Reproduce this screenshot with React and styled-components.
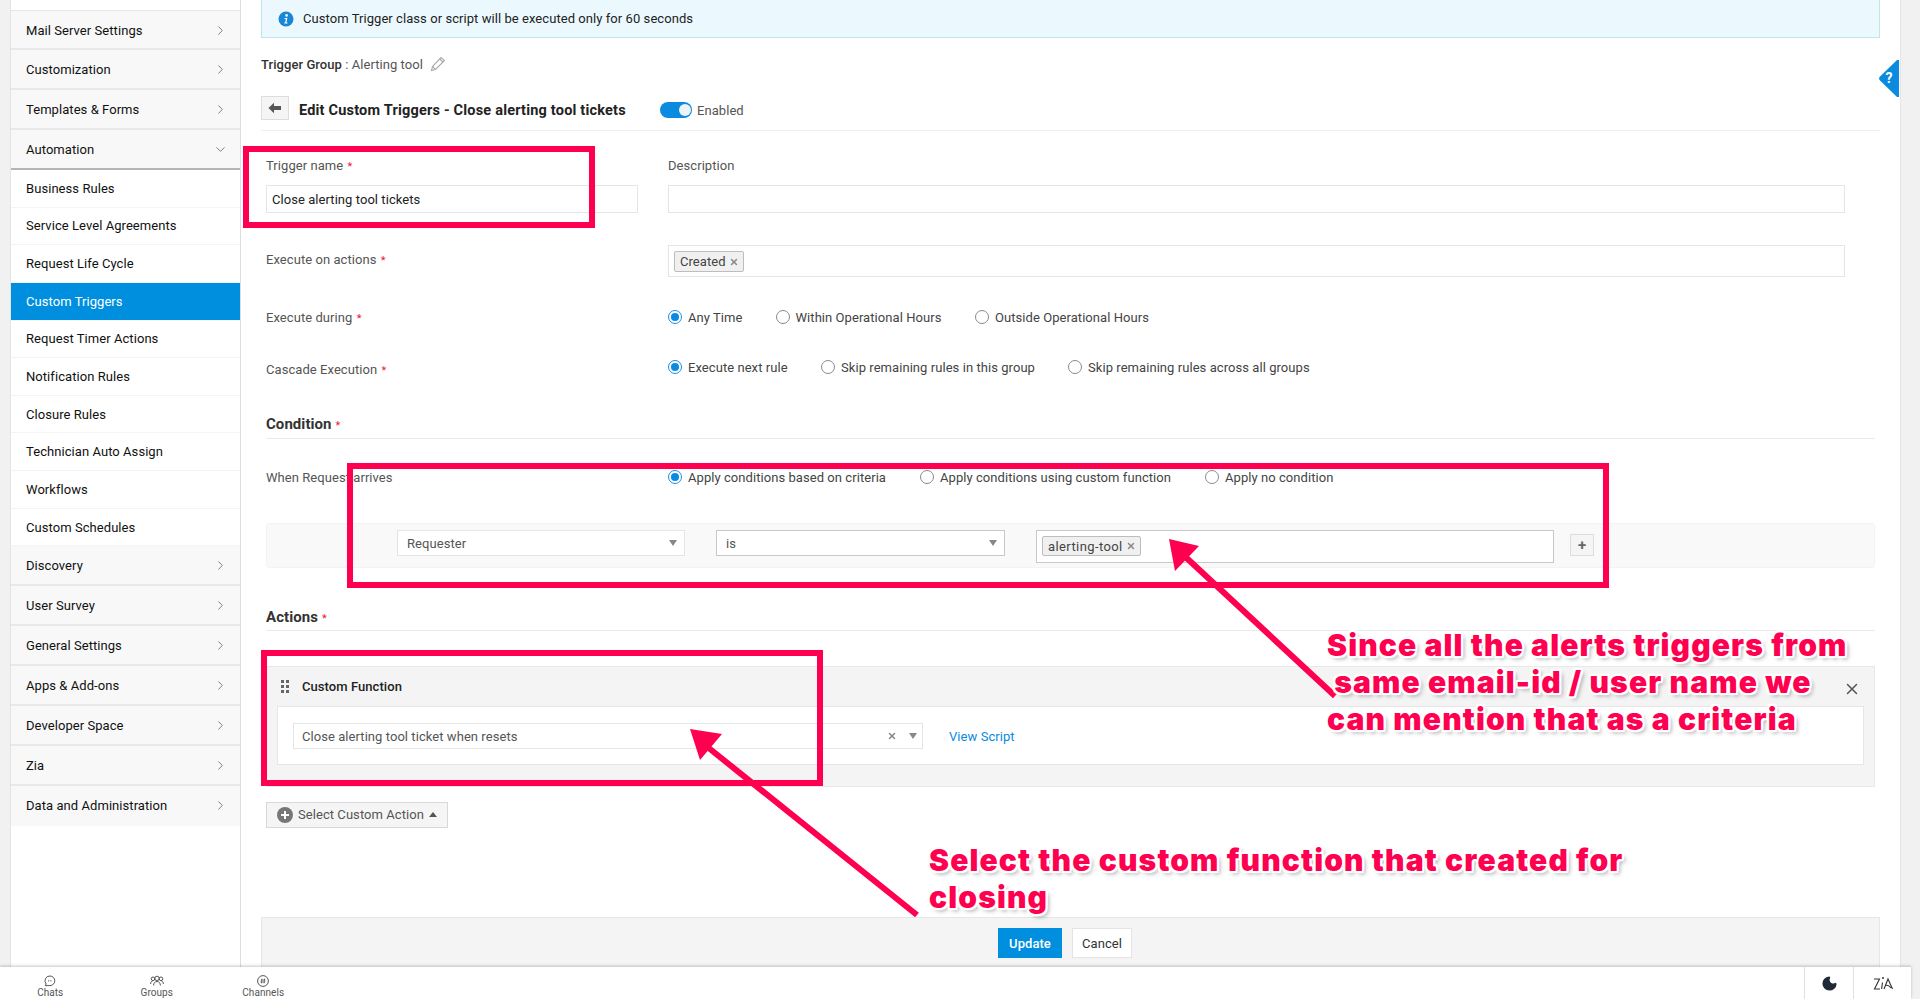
import React from "react";
import styled, { createGlobalStyle } from "styled-components";
import { ChevronRight, ChevronDown, Moon, X } from "lucide-react";

const Global = createGlobalStyle`
  html, body { margin: 0; padding: 0; background: #fff; }
  body { font-family: Roboto, "Liberation Sans", sans-serif; font-size: 13px; letter-spacing: 0.06px; color: #333; }
  * { box-sizing: border-box; }
`;

const Page = styled.div`
  position: relative;
  width: 1920px;
  height: 999px;
  overflow: hidden;
  background: #f1f1f1;
`;
const Body = styled.div`
  display: flex;
  height: 967px;
  background: #fff;
`;
const Gutter = styled.div`
  width: 11px;
  background: #f1f1f1;
  border-right: 1px solid #e4e4e4;
  flex: none;
`;
const Sidebar = styled.nav`
  width: 230px;
  flex: none;
  padding-top: 10px;
  background: #fff;
  border-right: 1px solid #dedede;
`;
const GroupItem = styled.div`
  display: flex;
  align-items: center;
  justify-content: space-between;
  height: 40px;
  padding: 1px 12px 0 15px;
  background: #f8f8f8;
  color: #111;
  border-top: ${(p) => (p.$first ? "1px solid #e6e6e6" : "0")};
  border-bottom: ${(p) => (p.$open ? "2px solid #b4b4b4" : "2px solid #e8e8e8")};
  svg { color: #777; }
  &:last-child { border-bottom-color: transparent; }
`;
const SubItem = styled.div`
  display: flex;
  align-items: center;
  height: 37.65px;
  padding: 0 15px;
  color: ${(p) => (p.$active ? "#fff" : "#111")};
  background: ${(p) => (p.$active ? "#008fdf" : "#fff")};
  border-bottom: 1px solid #f4f4f4;
`;
const Content = styled.main`
  width: 1619px;
  flex: none;
  margin-left: 20px;
`;
const Rail = styled.div`
  flex: 1;
  margin-left: 20px;
  background: #f1f1f1;
  border-left: 1px solid #e4e4e4;
`;
const Banner = styled.div`
  display: flex;
  align-items: center;
  gap: 9px;
  height: 38px;
  padding-left: 16px;
  background: #ebf9ff;
  border: 1px solid #bfe6ef;
  border-top: 0;
  color: #222;
`;
const GroupLine = styled.div`
  display: flex;
  align-items: center;
  gap: 7px;
  height: 16px;
  margin: 18px 0 24px;
  color: #555;
  b { font-weight: 500; color: #333; }
`;
const TitleBar = styled.div`
  display: flex;
  height: 35px;
  border-bottom: 1px solid #eee;
`;
const BackButton = styled.div`
  display: flex;
  align-items: center;
  justify-content: center;
  width: 28px;
  height: 24px;
  background: #f5f5f5;
  border: 1px solid #ddd;
`;
const Title = styled.h1`
  margin: 1px 0 0 10px;
  width: 361px;
  height: 28px;
  font-size: 14.5px;
  line-height: 28px;
  font-weight: 700;
  letter-spacing: 0.2px;
  white-space: nowrap;
  color: #222;
`;
const Toggle = styled.div`
  position: relative;
  width: 32px;
  height: 16px;
  margin-top: 6px;
  border-radius: 8px;
  background: #0a8be0;
  &::after {
    content: "";
    position: absolute;
    top: 2px;
    right: 1px;
    width: 12px;
    height: 12px;
    border-radius: 50%;
    background: #eef3f7;
  }
`;
const ToggleText = styled.span`
  margin: 7px 0 0 5px;
  line-height: 16px;
  color: #555;
`;
const Form = styled.div`
  padding: 0 5px;
`;
const NameRow = styled.div`
  display: grid;
  grid-template-columns: 372px 1fr;
  column-gap: 30px;
  padding-top: 27px;
  padding-right: 30px;
`;
const Field = styled.div`
  display: flex;
  flex-direction: column;
  gap: 11px;
`;
const Label = styled.label`
  display: block;
  height: 16px;
  line-height: 16px;
  color: #555;
  padding-top: ${(p) => p.$top || 0}px;
  box-sizing: content-box;
  i { color: #f0143c; font-style: normal; font-size: 11px; margin-left: 1px; }
`;
const TextBox = styled.div`
  display: flex;
  align-items: center;
  height: 28px;
  padding-left: 5px;
  color: #222;
  border: 1px solid #e5e5e5;
`;
const Row = styled.div`
  display: grid;
  grid-template-columns: 402px 1fr;
  margin-top: ${(p) => p.$mt}px;
  height: ${(p) => p.$h}px;
  padding-right: 30px;
`;
const ActionsBox = styled.div`
  height: 32px;
  padding: 5px;
  border: 1px solid #e5e5e5;
`;
const Chip = styled.span`
  display: inline-flex;
  align-items: center;
  gap: 3px;
  height: ${(p) => p.$h || 21}px;
  padding: 0 4px 0 5px;
  color: #444;
  letter-spacing: ${(p) => p.$ls || 0.06}px;
  background: #f0f0f0;
  border: 1px solid #bdbdbd;
  border-radius: 2px;
  svg { color: #888; }
`;
const Radios = styled.div`
  display: flex;
  height: 16px;
  align-items: center;
`;
const RadioItem = styled.span`
  display: inline-flex;
  align-items: center;
  width: ${(p) => p.$w}px;
  gap: 6px;
  color: #444;
  white-space: nowrap;
`;
const Dot = styled.span`
  position: relative;
  width: 14px;
  height: 14px;
  flex: none;
  border-radius: 50%;
  border: 1px solid ${(p) => (p.$on ? "#1a8fdf" : "#8a8a8a")};
  background: #fff;
  &::after {
    content: "";
    display: ${(p) => (p.$on ? "block" : "none")};
    position: absolute;
    inset: 2px;
    border-radius: 50%;
    background: #0a8be0;
  }
`;
const Heading = styled.h2`
  margin: ${(p) => p.$mt}px 0 0;
  height: ${(p) => p.$h}px;
  padding-top: 0;
  font-size: 15px;
  line-height: 20px;
  font-weight: 700;
  color: #333;
  border-bottom: 1px solid #eaeaea;
  i { color: #f0143c; font-style: normal; font-size: 11px; margin-left: 4px; font-weight: 400; }
`;
const CriteriaRow = styled.div`
  display: flex;
  align-items: flex-start;
  height: 45px;
  margin-top: 38px;
  padding: 6px 0 0 130px;
  background: #f9f9f9;
  border: 1px solid #f3f3f3;
  border-radius: 4px;
`;
const SelectBox = styled.div`
  display: flex;
  align-items: center;
  justify-content: space-between;
  flex: none;
  width: ${(p) => p.$w}px;
  height: 26px;
  margin-right: ${(p) => p.$mr || 0}px;
  padding: 0 7px 0 9px;
  color: #555;
  background: #fff;
  border: 1px solid ${(p) => (p.$dark ? "#c8c8c8" : "#e4e4e4")};
`;
const Caret = styled.span`
  width: 0;
  height: 0;
  border-left: 4px solid transparent;
  border-right: 4px solid transparent;
  border-top: 6px solid #888;
`;
const MultiBox = styled.div`
  flex: none;
  width: 518px;
  height: 33px;
  margin-right: 16px;
  padding: 5px 5px;
  background: #fff;
  border: 1px solid #c8c8c8;
`;
const PlusButton = styled.div`
  display: flex;
  align-items: center;
  justify-content: center;
  width: 24px;
  height: 22px;
  margin-top: 4px;
  color: #666;
  font-size: 15px;
  font-weight: 700;
  background: #f5f5f5;
  border: 1px solid #ddd;
`;
const ActionPanel = styled.section`
  height: 121px;
  margin: 35px 0 0 1px;
  background: #f4f4f4;
  border: 1px solid #e8e8e8;
  border-width: 1px 1px 1px 0;
`;
const PanelHead = styled.div`
  display: flex;
  align-items: center;
  gap: 13px;
  height: 39px;
  padding-left: 14px;
  font-weight: 500;
  color: #222;
`;
const CloseMark = styled(X)`
  margin-left: auto;
  margin-right: 13px;
  margin-top: 5px;
  color: #555;
`;
const PanelBody = styled.div`
  display: flex;
  align-items: flex-start;
  height: 59px;
  margin: 0 10px;
  padding: 16px 0 0 15px;
  background: #fff;
  border: 1px solid #e6e6e6;
`;
const FunctionSelect = styled.div`
  display: flex;
  align-items: center;
  width: 630px;
  height: 26px;
  padding: 0 5px 0 8px;
  color: #555;
  border: 1px solid #e6e6e6;
`;
const FunctionName = styled.span`
  flex: 1;
`;
const ClearMark = styled(X)`
  color: #888;
  margin-right: 12px;
`;
const ViewScript = styled.a`
  margin: 6px 0 0 26px;
  color: #0a8be0;
`;
const AddButton = styled.div`
  display: flex;
  align-items: center;
  width: 182px;
  height: 26px;
  margin-top: 15px;
  padding: 0 0 1px 10px;
  gap: 5px;
  color: #555;
  background: #f5f5f5;
  border: 1px solid #d8d8d8;
`;
const CaretUp = styled.span`
  margin-left: 0;
  width: 0;
  height: 0;
  border-left: 4px solid transparent;
  border-right: 4px solid transparent;
  border-bottom: 5px solid #555;
`;
const BottomBar = styled.div`
  display: flex;
  justify-content: center;
  gap: 10px;
  height: 60px;
  margin-top: 89px;
  padding: 10px 11px 0 0;
  background: #f4f4f4;
  border: 1px solid #e6e6e6;
`;
const Primary = styled.div`
  display: flex;
  align-items: center;
  justify-content: center;
  width: 64px;
  height: 30px;
  color: #fff;
  font-weight: 500;
  background: #008fdf;
`;
const Secondary = styled.div`
  display: flex;
  align-items: center;
  justify-content: center;
  width: 60px;
  height: 30px;
  color: #333;
  background: #fff;
  border: 1px solid #e4e4e4;
`;
const Footer = styled.footer`
  position: relative;
  display: flex;
  align-items: stretch;
  width: 1911px;
  height: 32px;
  background: #fff;
  box-shadow: 0 -1px 3px rgba(0, 0, 0, 0.22);
`;
const FootTab = styled.div`
  display: flex;
  flex-direction: column;
  align-items: center;
  width: 106.5px;
  padding-top: 8px;
  font-size: 10px;
  line-height: 12px;
  color: #555;
  &:first-child { margin-left: -3px; }
`;
const FootSpace = styled.div`
  flex: 1;
`;
const FootIcon = styled.div`
  display: flex;
  align-items: center;
  justify-content: center;
  width: ${(p) => p.$w}px;
  border-left: 1px solid #e0e0e0;
`;
const Help = styled.div`
  position: absolute;
  left: 1879px;
  top: 60px;
  width: 20px;
  height: 37px;
`;
const Overlay = styled.svg`
  position: absolute;
  inset: 0;
  pointer-events: none;
`;
const Callout = styled.div`
  position: absolute;
  left: ${(p) => p.$x}px;
  top: ${(p) => p.$y}px;
  width: 760px;
  white-space: pre;
  font-family: Inter, "Open Sans", sans-serif;
  font-weight: 900;
  font-size: 30px;
  line-height: 37px;
  letter-spacing: 1.15px;
  color: #ff0050;
  text-shadow: 2px 0 1px #fff, -2px 0 1px #fff, 0 2px 1px #fff, 0 -2px 1px #fff,
    2px 2px 1px #fff, -2px -2px 1px #fff, 2px -2px 1px #fff, -2px 2px 1px #fff,
    3px 3px 4px rgba(0, 0, 0, 0.35);
`;

const Req = () => <i>*</i>;

const Info = () => (
  <svg width="16" height="16" viewBox="0 0 16 16">
    <circle cx="8" cy="8" r="7.5" fill="#1a87d6" />
    <circle cx="8.6" cy="4.4" r="1.3" fill="#fff" />
    <path d="M6.6 7h2.8l-1 4.6h1.1v.9H6.3v-.9h.9l.7-3.7H6.6z" fill="#fff" />
  </svg>
);
const Pencil = () => (
  <svg width="16" height="16" viewBox="0 0 16 16" fill="none" stroke="#aaa" strokeWidth="1.1">
    <path d="M1.5 14.5 2.5 10.5 11 1.5 14.5 4.5 5.5 13.5z" />
    <path d="M9.6 3l3.4 3M2.5 10.5l3 3" />
  </svg>
);
const BackArrow = () => (
  <svg width="14" height="12" viewBox="0 0 14 12">
    <path d="M0.5 6 6 0.8v3.2h7v4H6v3.2z" fill="#555" />
  </svg>
);
const DragDots = () => (
  <svg width="8" height="13" viewBox="0 0 8 13" fill="#666">
    {[0, 5, 10].flatMap((y) => [0, 5].map((x) => <rect key={x + "-" + y} x={x} y={y} width="3" height="3" />))}
  </svg>
);
const PlusDisc = () => (
  <svg width="16" height="16" viewBox="0 0 16 16">
    <circle cx="8" cy="8" r="8" fill="#777" />
    <path d="M8 4v8M4 8h8" stroke="#fff" strokeWidth="2" />
  </svg>
);
const ChatIcon = () => (
  <svg width="12" height="12" viewBox="0 0 12 12" fill="none" stroke="#444" strokeWidth="0.9">
    <path d="M6 1a4.8 4.8 0 0 1 4.8 4.8A4.8 4.8 0 0 1 6 10.6H1.2l1-1.6A4.8 4.8 0 0 1 6 1z" />
    <path d="M4 5.8h4" strokeDasharray="1 .8" />
  </svg>
);
const GroupIcon = () => (
  <svg width="14" height="12" viewBox="0 0 14 12" fill="none" stroke="#444" strokeWidth="0.9">
    <circle cx="7" cy="3.4" r="2.2" />
    <circle cx="3" cy="3.8" r="1.8" />
    <circle cx="11" cy="3.8" r="1.8" />
    <path d="M3.6 10.5c0-2.5 1.4-4 3.4-4s3.4 1.5 3.4 4M.6 9c0-1.6.8-2.8 2-3M13.4 9c0-1.6-.8-2.8-2-3" />
  </svg>
);
const ChannelIcon = () => (
  <svg width="12" height="12" viewBox="0 0 12 12" fill="none" stroke="#444" strokeWidth="0.9">
    <circle cx="6" cy="6" r="5.4" />
    <path d="M5 3.6 4.4 8.4M7.6 3.6 7 8.4M3.7 5h4.8M3.5 7h4.8" strokeWidth="0.7" />
  </svg>
);
const ZiaIcon = () => (
  <svg width="20" height="16" viewBox="0 0 20 16" fill="none" stroke="#333" strokeWidth="1.1">
    <path d="M1 4h5.5L1.5 14H7" />
    <path d="M9.5 7.5 8.6 14" />
    <circle cx="10" cy="3" r="1" fill="#333" stroke="none" />
    <path d="M11 14 15 4l4.5 10M13 10c2 .2 4 1.4 5 3" />
  </svg>
);

const top = ["Mail Server Settings", "Customization", "Templates & Forms"];
const subs = [
  "Business Rules", "Service Level Agreements", "Request Life Cycle", "Custom Triggers",
  "Request Timer Actions", "Notification Rules", "Closure Rules", "Technician Auto Assign",
  "Workflows", "Custom Schedules",
];
const bottom = ["Discovery", "User Survey", "General Settings", "Apps & Add-ons", "Developer Space", "Zia", "Data and Administration"];

const Group = ({ name, first }) => (
  <GroupItem $first={first}>
    {name}
    <ChevronRight size={15} strokeWidth={1.5} />
  </GroupItem>
);

const RadioSet = ({ items }) => (
  <Radios>
    {items.map(([t, w, on]) => (
      <RadioItem key={t} $w={w}>
        <Dot $on={on} />
        {t}
      </RadioItem>
    ))}
  </Radios>
);

export default function App() {
  return (
    <Page>
      <Global />
      <Body>
        <Gutter />
        <Sidebar>
          {top.map((n, i) => <Group key={n} name={n} first={i === 0} />)}
          <GroupItem $open>
            Automation
            <ChevronDown size={15} strokeWidth={1.5} />
          </GroupItem>
          {subs.map((s) => (
            <SubItem key={s} $active={s === "Custom Triggers"}>{s}</SubItem>
          ))}
          {bottom.map((n) => <Group key={n} name={n} />)}
        </Sidebar>
        <Content>
          <Banner>
            <Info />
            Custom Trigger class or script will be executed only for 60 seconds
          </Banner>
          <GroupLine>
            <span><b>Trigger Group</b> : Alerting tool</span>
            <Pencil />
          </GroupLine>
          <TitleBar>
            <BackButton><BackArrow /></BackButton>
            <Title>Edit Custom Triggers - Close alerting tool tickets</Title>
            <Toggle />
            <ToggleText>Enabled</ToggleText>
          </TitleBar>
          <Form>
            <NameRow>
              <Field>
                <Label>Trigger name <Req /></Label>
                <TextBox>Close alerting tool tickets</TextBox>
              </Field>
              <Field>
                <Label>Description</Label>
                <TextBox />
              </Field>
            </NameRow>
            <Row $mt={32} $h={32}>
              <Label $top={7}>Execute on actions <Req /></Label>
              <ActionsBox>
                <Chip>Created <X size={10} strokeWidth={3.5} /></Chip>
              </ActionsBox>
            </Row>
            <Row $mt={32} $h={16}>
              <Label $top={1}>Execute during <Req /></Label>
              <RadioSet items={[["Any Time", 107.5, true], ["Within Operational Hours", 199.5], ["Outside Operational Hours", 200]]} />
            </Row>
            <Row $mt={34} $h={16}>
              <Label $top={3}>Cascade Execution <Req /></Label>
              <RadioSet items={[["Execute next rule", 153, true], ["Skip remaining rules in this group", 247], ["Skip remaining rules across all groups", 250]]} />
            </Row>
            <Heading $mt={39} $h={25}>Condition<Req /></Heading>
            <Row $mt={30} $h={16}>
              <Label $top={1}>When Request arrives</Label>
              <RadioSet items={[["Apply conditions based on criteria", 252, true], ["Apply conditions using custom function", 285], ["Apply no condition", 200]]} />
            </Row>
            <CriteriaRow>
              <SelectBox $w={288} $mr={31}>Requester <Caret /></SelectBox>
              <SelectBox $w={289} $mr={31} $dark>is <Caret /></SelectBox>
              <MultiBox>
                <Chip $h={20} $ls={0.4}>alerting-tool <X size={10} strokeWidth={3.5} /></Chip>
              </MultiBox>
              <PlusButton>+</PlusButton>
            </CriteriaRow>
            <Heading $mt={39} $h={24}>Actions<Req /></Heading>
            <ActionPanel>
              <PanelHead>
                <DragDots />
                Custom Function
                <CloseMark size={18} strokeWidth={2} />
              </PanelHead>
              <PanelBody>
                <FunctionSelect>
                  <FunctionName>Close alerting tool ticket when resets</FunctionName>
                  <ClearMark size={10} strokeWidth={3.5} />
                  <Caret />
                </FunctionSelect>
                <ViewScript>View Script</ViewScript>
              </PanelBody>
            </ActionPanel>
            <AddButton>
              <PlusDisc />
              Select Custom Action
              <CaretUp />
            </AddButton>
          </Form>
          <BottomBar>
            <Primary>Update</Primary>
            <Secondary>Cancel</Secondary>
          </BottomBar>
        </Content>
        <Rail />
      </Body>
      <Footer>
        <FootTab><ChatIcon />Chats</FootTab>
        <FootTab><GroupIcon />Groups</FootTab>
        <FootTab><ChannelIcon />Channels</FootTab>
        <FootSpace />
        <FootIcon $w={49}><Moon size={17} fill="#1f2a36" color="#1f2a36" /></FootIcon>
        <FootIcon $w={58}><ZiaIcon /></FootIcon>
      </Footer>
      <Help>
        <svg width="20" height="37" viewBox="0 0 20 37">
          <path d="M20 0h-2L1 16.5a3 3 0 0 0 0 4L18 37h2z" fill="#0a8be0" />
          <text x="6.5" y="23" fontSize="14" fontWeight="700" fill="#fff" fontFamily="Roboto, sans-serif">?</text>
        </svg>
      </Help>
      <Overlay width="1920" height="999" viewBox="0 0 1920 999">
        <g fill="none" stroke="#ff0050" strokeWidth="6">
          <rect x="246" y="149" width="346" height="76" />
          <rect x="350" y="466" width="1256" height="119" />
          <rect x="264" y="653" width="556" height="130" />
        </g>
        <g stroke="#ff0050" strokeWidth="6" fill="#ff0050">
          <line x1="1335" y1="696" x2="1178" y2="550" />
          <line x1="917" y1="915" x2="700" y2="741" />
        </g>
        <path d="M1169 539 1199 546 1175 571z" fill="#ff0050" />
        <path d="M690 729 722 734 700 760z" fill="#ff0050" />
      </Overlay>
      <Callout $x={1327} $y={627}>{"Since all the alerts triggers from\n same email-id / user name we\ncan mention that as a criteria"}</Callout>
      <Callout $x={929} $y={842}>{"Select the custom function that created for\nclosing"}</Callout>
    </Page>
  );
}
